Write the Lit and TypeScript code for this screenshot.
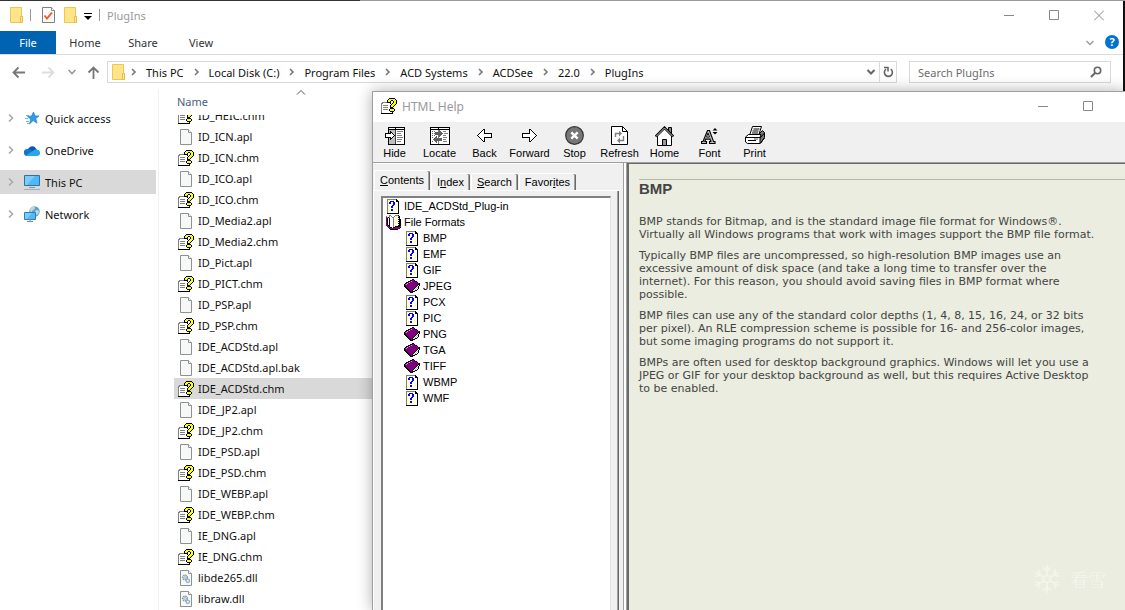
import { LitElement, html, css, svg } from "lit";

/* ---------- icon helpers ---------- */

const PALETTE: Record<string, string> = {
  k: "#000000", w: "#ffffff", g: "#808080", y: "#ffff00", d: "#404040", e: "#606060",
  s: "#c0c0c0", b: "#0000ff", p: "#800080", l: "#ffff80", q: "#c8a0c8",
};

/** Draws a bitmap icon from rows of palette letters. */
const bitmap = (rows: string[]) => {
  const width = Math.max(...rows.map((r) => r.length));
  const runs: unknown[] = [];
  rows.forEach((row, y) => {
    for (let x = 0; x < row.length; ) {
      let end = x + 1;
      while (row[end] === row[x]) end++;
      const fill = PALETTE[row[x]];
      if (fill) runs.push(svg`<rect x=${x} y=${y} width=${end - x} height="1" fill=${fill}></rect>`);
      x = end;
    }
  });
  return html`<svg width=${width} height=${rows.length} viewBox="0 0 ${width} ${rows.length}" shape-rendering="crispEdges" aria-hidden="true">${runs}</svg>`;
};

const icon = (w: number, h: number, body: unknown) =>
  html`<svg width=${w} height=${h} viewBox="0 0 ${w} ${h}" fill="none" aria-hidden="true">${body}</svg>`;

const chmIcon = () => bitmap([
  "........kkkkkk..",
  ".......kyyyyyyk.",
  "......kyyykkyyyk",
  "......kyyk..kyyk",
  ".gggggkkkk..kyyk",
  "ggwwwwwwwk.kyyyk",
  "gwwwwwwwwwkyyyk.",
  "gwgggggwwkyyyk..",
  "gwwwwwwwwkyyk...",
  "gwgggggwwkkk....",
  "gwwwwwwwwkkkk...",
  "gwgggggwkyyyyk..",
  "gwwwwwwwkyyyyk..",
  "gwwwwwwwwkkkk...",
  "gwwwwwwwwwwk....",
  "kkkkkkkkkkkk....",
]);

const topicIcon = () => bitmap([
  "gggggggggk..",
  "gwlwlwlwwkk.",
  "glwbbbbwwkkk",
  "gwbbwwbbwwwk",
  "glbbwwbbwlwk",
  "gwwwwwbbwwwk",
  "glwwwbbwwlwk",
  "gwlwbbwwlwwk",
  "glwwbbwwwlwk",
  "gwlwwwwwlwwk",
  "glwwbbwwwlwk",
  "gwlwbbwwlwwk",
  "glwlwlwlwwwk",
  "gwwwwwwwwwwk",
  "kkkkkkkkkkkk",
]);

const bookIcon = () => bitmap([
  "........kk......",
  "......kkppk.....",
  "....kkpqpppkk...",
  "..kkpqpppppppk..",
  ".kpqpppppppppppk",
  "kpqpppppppppppkk",
  "kppppppppppppkwk",
  "kkppppppppppkwk.",
  ".kkppppppppkwsk.",
  "..kkppppppkwswk.",
  "...kkppppkwswk..",
  "....kkppkwskk...",
  ".....kkpkkk.....",
  "......kkk.......",
]);

const openBookIcon = () => bitmap([
  "...gg....gggk..",
  "g..gwg..gwlwgk.",
  "pgkgwwggwlwwkk.",
  "pkwkwwwgwwlwwk.",
  "pkwkwwwgwlwwkkk",
  "pkwkwwwgwwlwwkk",
  "pkwkwwwgwlwwkkk",
  "pkwkwwwgwwlwwkk",
  "pkwkwwwgwlwwkkk",
  "pkwkwwwgwwlwwkk",
  "ppkkwwwgwlwwkkk",
  ".ppkwwwgwkkkkkp",
  "..ppkkwkkpppppk",
  "...ppppppppppk.",
  "....kkkkkkkk...",
]);

const fileIcon = () => icon(12, 16, svg`
  <path d="M.5.5h8l3 3v12H.5z" fill="#f7f9f9" stroke="#8d9290"/>
  <path d="M8.5.5v3h3" fill="#fff" stroke="#8d9290"/>`);

const dllIcon = () => icon(12, 16, svg`
  <path d="M.5.5h8l3 3v12H.5z" fill="#f7f9f9" stroke="#8d9290"/>
  <path d="M8.5.5v3h3" fill="#fff" stroke="#8d9290"/>
  <circle cx="5" cy="7.500" r="2.300" stroke="#8b98a3" stroke-width="1.600" stroke-dasharray="1.400 .6"/>
  <circle cx="5" cy="7.500" r="1" stroke="#8b98a3" stroke-width=".6"/>
  <circle cx="7.800" cy="10.800" r="1.700" stroke="#8fb6d3" stroke-width="1.400"/>`);

const folderIcon = () => icon(13, 16, svg`
  <path d="M.5.5h11v9h1v6H.5z" fill="#ffe48a" stroke="#ecc752"/>
  <path d="M10.500 9.500h2v6h-2z" fill="#ffe9a0" stroke="#e8bf43"/>`);

const propertiesIcon = () => icon(13, 16, svg`
  <path d="M.5.5h9l3 3v12H.5z" fill="#fbfbfb" stroke="#7f7f7f"/>
  <path d="M9.500.5v3h3" fill="#fff" stroke="#8f8f8f"/>
  <path d="M2.500 8.500l2.500 3 5-6" stroke="#ee5a24" stroke-width="1.900"/>`);

const chevron = (dir: "right" | "down" | "up", color: string, width = 1.6) => {
  const d = { right: "M3 1.500L6.500 5 3 8.500", down: "M1.500 3L5 6.500 8.500 3", up: "M1 6.500l4-4 4 4" }[dir];
  return icon(10, 10, svg`<path d=${d} stroke=${color} stroke-width=${width}/>`);
};

const crumbChevron = () => icon(10, 10, svg`<path d="M3 2l3 3-3 3" stroke="#777" stroke-width="1.600"/>`);

const arrow = (dir: "left" | "right" | "up", color: string) => {
  const d = {
    left: "M13 6.500H1.500M6.500 1.500l-5 5 5 5",
    right: "M0 6.500h11.500M6.500 1.500l5 5-5 5",
    up: "M6.500 13V1.500M1.500 6.500l5-5 5 5",
  }[dir];
  return icon(13, 13, svg`<path d=${d} stroke=${color} stroke-width="1.800"/>`);
};

const starIcon = () => icon(15, 14, svg`
  <path d="M8.500 1l1.600 4H14l-3.200 2.600 1.200 4.600-3.800-2.600L4.500 13l1.200-4.800L2.500 5.400l4-.3z" fill="#2f9bea" stroke="#1d83d0" stroke-width=".7"/>
  <path d="M1 4.500h3M0 7.500h3M1 10.500h3M2 12.500h2" stroke="#64b5f0"/>`);

const cloudIcon = () => icon(16, 11, svg`
  <path d="M4 6a4.300 4.300 0 0 1 8-2.600L13 5 6 9z" fill="#0a57b0"/>
  <path d="M3.500 11A3.500 3.500 0 0 1 3.200 4a4 4 0 0 1 3 .6L12 8l-4 3z" fill="#1674cf"/>
  <path d="M3.500 11l-1.500-.6L9.500 5.500A3.500 3.500 0 0 1 13 4.800 3.100 3.100 0 0 1 13 11z" fill="#28a8ea"/>`);

const pcIcon = () => icon(16, 16, svg`
  <path d="M.5 1.500h15v10H.5z" fill="#4db8fa" stroke="#3a6e93"/>
  <path d="M1 2h10L3 11H1z" fill="#7accfc"/>
  <path d="M5 13.500h6" stroke="#7d98aa"/><path d="M0 15.500h16" stroke="#9db0bd"/>`);

const networkIcon = () => icon(16, 16, svg`
  <circle cx="10.500" cy="5.500" r="5.200" fill="#5f9fc6"/>
  <path d="M6 3c2-3 5-3 5-1S8 4 8 6 6 6 6 3zM11 5c2-2 4-1 4 1s-3 4-4 3z" fill="#b5d8e4"/>
  <path d="M.5 6.500h11v7H.5z" fill="#4db8fa" stroke="#3a7ba8"/>
  <path d="M1 7h7l-5 6H1z" fill="#7accfc"/><path d="M3 15.500h6M6 13v2" stroke="#7391a5"/>`);

const searchIcon = () => icon(12, 12, svg`
  <circle cx="7.500" cy="4.500" r="3.200" stroke="#666" stroke-width="1.600"/>
  <path d="M5 7L1 11" stroke="#666" stroke-width="2"/>`);

const reloadIcon = () => icon(11, 12, svg`
  <path d="M7.800 3.200A4 4 0 1 1 3 3.200" stroke="#666" stroke-width="1.600"/>
  <path d="M1 1.500h4v4" stroke="#666" stroke-width="1.600"/>`);

const minimizeIcon = () => icon(10, 11, svg`<path d="M0 5.500h10" stroke="#888"/>`);
const maximizeIcon = () => icon(10, 11, svg`<path d="M.5.5h9v9h-9z" stroke="#888"/>`);
const closeIcon = () => icon(10, 11, svg`<path d="M0 .5l10 10M10 .5L0 10.500" stroke="#888"/>`);

const hideIcon = () => bitmap([
  "...kkkkkkkkkkkkkkkkk",
  "...kwwwwwwkwwwwwwwwk",
  "...kkkkkkkkkkkkkkkkk",
  "...kssssssdwwwwwwwwk",
  "...kskssssdwggggggwk",
  "...kskksssdwwwwwwwwk",
  "kkkkkkwkssdwggggwwwk",
  "kwwwwwwwksdwwwwwwwwk",
  "kwwwwwwwwkdwgggggwwk",
  "kwwwwwwwksdwwwwwwwwk",
  "kkkkkkwkssdwggggggwk",
  "...kskksssdwwwwwwwwk",
  "...kskssssdwgggggwwk",
  "...kssssssdwwwwwwwwk",
  "...kssssssdwggggwwwk",
  "...kssssssdwwwwwwwwk",
  "...kssssssdwwwwwwwwk",
  "...kkkkkkkkkkkkkkkkk",
]);

const locateIcon = () => bitmap([
  "kkkkkkkkkkkkkkkkkkkk",
  "kwwwwwwwkwwwwwwwwwwk",
  "kkkkkkkkkkkkkkkkkkkk",
  "kwwwwwwwgewwwwwwwwwk",
  "kwewewwwgeewwgggwwwk",
  "kwwwweeeeeeewwwwwwwk",
  "kweweeeeeeeeewggggwk",
  "kwwwweeeeeeewwwwwwwk",
  "kwewewwwgeewwgggwwwk",
  "kwwwwwewgewwwwwwwwwk",
  "kwewweewgwwwwggggwwk",
  "kwwweeeeeeeewwwwwwwk",
  "kwweeeeeeeeewgggwwwk",
  "kwwweeeeeeeewwwwwwwk",
  "kwewweewgwwwwggggwwk",
  "kwwwwwewgwwwwwwwwwwk",
  "kwwwwwwwgwwwwwwwwwwk",
  "kkkkkkkkkkkkkkkkkkkk",
]);

const backRows = [
  "......kk.......",
  ".....kwk.......",
  "....kwwk.......",
  "...kwwwk.......",
  "..kwwwwkkkkkkkk",
  ".kwwwwwwwwwwwwk",
  "kwwwwwwwwwwwwwk",
  ".kwwwwwwwwwwwwk",
  "..kwwwwkkkkkkkk",
  "...kwwwk.......",
  "....kwwk.......",
  ".....kwk.......",
  "......kk.......",
];
const backIcon = () => bitmap(backRows);
const forwardIcon = () => bitmap(backRows.map((r) => [...r].reverse().join("")));

const stopIcon = () => icon(19, 19, svg`
  <circle cx="9.500" cy="9.500" r="8.800" fill="#777" stroke="#333" stroke-width="1.200"/>
  <path d="M6.300 6.300l6.400 6.400M12.700 6.300l-6.400 6.400" stroke="#fff" stroke-width="2.400"/>`);

const refreshIcon = () => icon(17, 19, svg`
  <path d="M.5.5h11l5 5v13H.5z" fill="#fff" stroke="#000"/>
  <path d="M11.500.5v5h5" stroke="#000"/>
  <path d="M4.500 11V7.500h4M12.500 10v4.500h-4" stroke="#808080" stroke-width="1.400"/>
  <path d="M8 4.500l3 3-3 3zM9 11.500l-3 3 3 3z" fill="#808080"/>`);

const homeIcon = () => icon(19, 20, svg`
  <path d="M13.500 8V1.500h3V10" fill="#888" stroke="#000"/>
  <path d="M2.500 10v9.500h14V10l-7-7z" fill="#fff" stroke="#000"/>
  <path d="M.5 10.500l9-9 9 9" stroke="#000" stroke-width="2.200"/>
  <path d="M1 10.500l8.500-8.500 8.500 8.500" stroke="#ddd" stroke-width=".9"/>
  <path d="M7.500 19.500v-6h4v6z" fill="#999" stroke="#000"/>`);

const fontIcon = () => icon(17, 16, svg`
  <path d="M6.500 2.500h2l4 11h1.500v2H8.500v-2h1.400l-.8-2.400H4.700l-.8 2.400h1.600v2H.5v-2H2z" fill="#bbb" stroke="#000" stroke-width="1.100"/>
  <path d="M5.500 9h3L7 5z" fill="#fff" stroke="#000" stroke-width=".9"/>
  <path d="M14 0l2.500 2.500h-5zM14 6.500l2.500-2.500h-5z" fill="#000"/>`);

const printIcon = () => icon(20, 19, svg`
  <path d="M4.500 9.500L7.500.5h9l-3 9" fill="#fff" stroke="#000"/>
  <path d="M8.500 3h6M7.500 5h6M7 7h6" stroke="#000"/>
  <path d="M14 8l3.500-3.500 2 2v5l-4 6" fill="#777" stroke="#000"/>
  <path d="M.5 11l3-2.500h12.500l-1 3v6H2.500l-2-1.500z" fill="#fff" stroke="#000"/>
  <path d="M1 11.500h14.500M3 14.500h8M15.500 11.500l4-4.500M15.500 17l4-5" stroke="#000"/>
  <path d="M9 13h4" stroke="#555"/>`);

const snowflakeIcon = () => icon(28, 30, svg`
  <g stroke="#f3f5ea" stroke-width="1.600">
  ${[0, 60, 120, 180, 240, 300].map((a) => svg`<path transform="rotate(${a} 14 15)" d="M14 12V1M10 3l4 4 4-4M14 11l-3 2"/>`)}
  </g>`);

/* ---------- data ---------- */

const FILES = [
  "ID_HEIC.chm", "ID_ICN.apl", "ID_ICN.chm", "ID_ICO.apl", "ID_ICO.chm", "ID_Media2.apl",
  "ID_Media2.chm", "ID_Pict.apl", "ID_PICT.chm", "ID_PSP.apl", "ID_PSP.chm", "IDE_ACDStd.apl",
  "IDE_ACDStd.apl.bak", "IDE_ACDStd.chm", "IDE_JP2.apl", "IDE_JP2.chm", "IDE_PSD.apl",
  "IDE_PSD.chm", "IDE_WEBP.apl", "IDE_WEBP.chm", "IE_DNG.apl", "IE_DNG.chm", "libde265.dll", "libraw.dll",
];
const CRUMBS = ["This PC", "Local Disk (C:)", "Program Files", "ACD Systems", "ACDSee", "22.0", "PlugIns"];
const NAV: [string, () => unknown][] = [
  ["Quick access", starIcon], ["OneDrive", cloudIcon], ["This PC", pcIcon], ["Network", networkIcon],
];
const TOOLS: [string, () => unknown][] = [
  ["Hide", hideIcon], ["Locate", locateIcon], ["Back", backIcon], ["Forward", forwardIcon],
  ["Stop", stopIcon], ["Refresh", refreshIcon], ["Home", homeIcon], ["Font", fontIcon], ["Print", printIcon],
];
const TOPICS: [string, () => unknown][] = [
  ["BMP", topicIcon], ["EMF", topicIcon], ["GIF", topicIcon], ["JPEG", bookIcon], ["PCX", topicIcon],
  ["PIC", topicIcon], ["PNG", bookIcon], ["TGA", bookIcon], ["TIFF", bookIcon], ["WBMP", topicIcon], ["WMF", topicIcon],
];

const controls = css`
  * { box-sizing: border-box; }
  svg { display: block; flex: none; }
  button { font: inherit; color: inherit; background: none; border: 0; padding: 0; margin: 0; }
  ul { list-style: none; margin: 0; padding: 0; }
`;

/* ---------- file explorer window ---------- */

class FileExplorer extends LitElement {
  static styles = [controls, css`
    :host { display: flex; flex-direction: column; background: #fff; color: #111; font: 11px "Noto Sans", "Open Sans", sans-serif; overflow: hidden; }
    .title { display: flex; align-items: center; height: 30px; padding: 0 19px 2px 10px; flex: none; }
    .title .sep { width: 1px; height: 12px; background: #999; margin: 0 7px; }
    .title .sep.first { margin-right: 11px; }
    .title .props { margin-right: 9px; }
    .title h1 { font: inherit; color: #999; margin: 0; flex: 1; }
    .more { margin: 2px 0 0 7px; }
    .buttons { display: flex; gap: 35px; }
    .ribbon { display: flex; height: 24px; flex: none; border-bottom: 1px solid #dadbdc; align-items: stretch; color: #333; }
    .ribbon button { width: 58px; }
    .ribbon .file { width: 56px; background: #0063b1; color: #fff; }
    .ribbon .grow { flex: 1; }
    .ribbon .collapse { width: 22px; display: grid; place-items: center; }
    .ribbon .help { width: 14px; height: 14px; margin: 4px 4px 0; border-radius: 50%; background: #0072d0; color: #fff; font-weight: 700; line-height: 14px; }
    .bar { display: flex; align-items: center; height: 34px; padding: 0 12px; flex: none; }
    .bar .move { margin-right: 17px; }
    .bar .fwd { margin-right: 12px; }
    .bar .recent { margin-right: 10px; }
    .bar .up { margin-right: 7px; }
    .address { flex: 1; display: flex; align-items: center; height: 22px; border: 1px solid #d9d9d9; padding-left: 4px; white-space: nowrap; }
    .address ol { display: flex; list-style: none; margin: 0 0 0 4px; padding: 0; flex: 1; }
    .address li { display: flex; align-items: center; padding-right: 8px; gap: 7px; }
    .reload { height: 20px; width: 17px; border-left: 1px solid #d9d9d9; display: grid; place-items: center; margin-left: 3px; }
    .search { display: flex; align-items: center; width: 202px; height: 22px; border: 1px solid #d9d9d9; margin-left: 12px; padding: 0 8px; }
    .search input { flex: 1; min-width: 0; border: 0; padding: 0; font: inherit; background: none; outline: 0; }
    .search input::placeholder { color: #6d6d6d; opacity: 1; }
    .body { display: flex; flex: 1; min-height: 0; }
    nav { width: 159px; border-right: 1px solid #f0f0f0; padding: 17px 2px 0 0; flex: none; }
    nav ul { display: flex; flex-direction: column; gap: 8px; }
    nav a { display: flex; align-items: center; height: 24px; padding-left: 6px; color: #111; text-decoration: none; }
    nav .icon { width: 16px; margin: 0 5px 0 8px; display: grid; place-items: center; }
    nav .current { background: #d9d9d9; }
    .list { width: 228px; display: flex; flex-direction: column; min-height: 0; padding-left: 15px; }
    .head { height: 26px; flex: none; padding: 5px 0 0 3px; display: grid; grid-template-columns: 119px 1fr; align-items: start; color: #4c607a; }
    .head svg { margin-top: -6px; }
    .head span { line-height: 16px; }
    .rows { flex: 1; overflow: hidden; }
    .rows ul { margin-top: -10px; }
    .rows li { display: flex; align-items: center; height: 21px; padding-left: 4px; gap: 4px; }
    .rows .icon { width: 16px; display: grid; place-items: center; }
    .rows .selected { background: #d9d9d9; }
  `];

  fileGlyph(name: string) {
    if (name.endsWith(".chm")) return chmIcon();
    return name.endsWith(".dll") ? dllIcon() : fileIcon();
  }

  render() {
    return html`
      <header class="title">
        ${folderIcon()}<span class="sep first"></span>
        <span class="props">${propertiesIcon()}</span>${folderIcon()}
        <span class="more">${icon(8, 7, svg`<path d="M0 .5h8" stroke="#000"/><path d="M0 3h8L4 7z" fill="#000"/>`)}</span>
        <span class="sep"></span>
        <h1>PlugIns</h1>
        <div class="buttons">
          <button aria-label="Minimize">${minimizeIcon()}</button>
          <button aria-label="Maximize">${maximizeIcon()}</button>
          <button aria-label="Close">${closeIcon()}</button>
        </div>
      </header>
      <div class="ribbon">
        <button class="file">File</button><button>Home</button><button>Share</button><button>View</button>
        <span class="grow"></span>
        <button class="collapse" aria-label="Expand the ribbon">${chevron("down", "#999", 1.3)}</button>
        <button class="help" aria-label="Help">?</button>
      </div>
      <div class="bar">
        <button class="move" aria-label="Back">${arrow("left", "#777")}</button>
        <button class="fwd" aria-label="Forward">${arrow("right", "#ddd")}</button>
        <button class="recent" aria-label="Recent locations">${chevron("down", "#999")}</button>
        <button class="up" aria-label="Up">${arrow("up", "#777")}</button>
        <div class="address">
          ${folderIcon()}
          <ol>${CRUMBS.map((c) => html`<li>${crumbChevron()}<span>${c}</span></li>`)}</ol>
          <button aria-label="Previous locations">${chevron("down", "#666", 2)}</button>
          <button class="reload" aria-label="Refresh">${reloadIcon()}</button>
        </div>
        <label class="search"><input type="text" placeholder="Search PlugIns" aria-label="Search PlugIns" />${searchIcon()}</label>
      </div>
      <div class="body">
        <nav><ul>${NAV.map(([name, glyph]) => html`<li><a href="#" class=${name === "This PC" ? "current" : ""}>
          ${chevron("right", "#aaa")}<span class="icon">${glyph()}</span>${name}</a></li>`)}</ul></nav>
        <section class="list">
          <div class="head"><span>Name</span>${chevron("up", "#555", 1)}</div>
          <div class="rows"><ul>${FILES.map((f) => html`<li class=${f === "IDE_ACDStd.chm" ? "selected" : ""}>
            <span class="icon">${this.fileGlyph(f)}</span>${f}</li>`)}</ul></div>
        </section>
      </div>`;
  }
}
customElements.define("file-explorer", FileExplorer);

/* ---------- HTML Help window ---------- */

class HelpWindow extends LitElement {
  static styles = [controls, css`
    :host { display: flex; flex-direction: column; background: #f0f0f0; color: #000; font: 11px "Liberation Sans", Arial, sans-serif; border: solid #a0a0a0; border-width: 1px 0 0 1px; box-shadow: 0 0 14px rgba(0, 0, 0, 0.32); }
    .title { display: flex; align-items: center; height: 30px; background: #fff; padding: 0 32px 2px 8px; flex: none; gap: 5px; }
    .title h1 { flex: 1; margin: 0; font: 12px "Noto Sans", "Open Sans", sans-serif; color: #999; }
    .buttons { display: flex; gap: 35px; }
    .tools { display: flex; height: 41px; flex: none; border-bottom: 1px solid #a0a0a0; }
    .tools button { width: 45px; display: flex; flex-direction: column; align-items: center; padding: 3px 2px 0 0; }
    .tools .glyph { height: 21px; display: grid; place-items: center; margin-bottom: 1px; }
    .panes { flex: 1; display: flex; min-height: 0; }
    .side { width: 246px; flex: none; display: flex; flex-direction: column; border-top: 1px solid #fff; padding-top: 6px; }
    .tabs { display: flex; align-items: flex-end; height: 20px; padding-left: 1px; }
    .tabs button { height: 17px; border: solid #fff; border-width: 1px 0 0 1px; box-shadow: inset -1px 0 #696969, inset -2px 0 #a0a0a0; border-radius: 2px 2px 0 0; margin-right: 1px; padding: 0 6px 0 5px; }
    .tabs .active { height: 20px; padding-bottom: 2px; }
    .page { flex: 1; border: solid #fff; border-width: 1px 0 0 1px; box-shadow: inset -1px 0 #696969, inset -2px 0 #a0a0a0; padding: 5px 8px 0 7px; display: flex; min-height: 0; }
    .tree { flex: 1; background: #fff; border: solid #808080; border-width: 2px 0 0 2px; border-right: 1px solid #e3e3e3; padding-left: 2px; }
    .tree li > span { display: flex; align-items: center; height: 16px; gap: 3px; }
    .tree .icon { width: 16px; display: grid; place-items: center; }
    .tree ul ul { padding-left: 19px; }
    .split { width: 4px; flex: none; border: solid #a0a0a0; border-width: 0 1px; margin-left: 4px; background: #fff; }
    article { position: relative; flex: 1; min-width: 0; background: #eaeddf; border: solid #696969; border-width: 1px 0 0 2px; padding: 15px 0 0 10px; font: 11px/13px "DejaVu Sans", Verdana, sans-serif; color: #444; }
    hr { border: 0; border-top: 1px solid #b4b7ac; margin: 0; }
    h2 { font: bold 15px/18px "Liberation Sans", Arial, sans-serif; margin: 0 0 17px; }
    p { margin: 0 0 8px; white-space: nowrap; }
    .mark { position: absolute; right: 19px; bottom: 16px; display: flex; align-items: center; gap: 9px; font: 18px "Noto Serif CJK SC", "Noto Sans CJK SC", serif; color: #f5f6ee; }
  `];

  render() {
    return html`
      <header class="title">${chmIcon()}<h1>HTML Help</h1>
        <div class="buttons"><button aria-label="Minimize">${minimizeIcon()}</button><button aria-label="Maximize">${maximizeIcon()}</button></div>
      </header>
      <div class="tools">${TOOLS.map(([name, glyph]) => html`<button><span class="glyph">${glyph()}</span>${name}</button>`)}</div>
      <div class="panes">
        <div class="side">
          <div class="tabs" role="tablist">
            <button class="active" role="tab"><u>C</u>ontents</button><button role="tab">I<u>n</u>dex</button><button role="tab"><u>S</u>earch</button><button role="tab">Favor<u>i</u>tes</button>
          </div>
          <div class="page"><div class="tree"><ul>
            <li><span><span class="icon">${topicIcon()}</span>IDE_ACDStd_Plug-in</span></li>
            <li><span><span class="icon">${openBookIcon()}</span>File Formats</span>
              <ul>${TOPICS.map(([name, glyph]) => html`<li><span><span class="icon">${glyph()}</span>${name}</span></li>`)}</ul>
            </li>
          </ul></div></div>
        </div>
        <div class="split"></div>
        <article>
          <hr />
          <h2>BMP</h2>
          <p>BMP stands for Bitmap, and is the standard image file format for Windows®.<br />Virtually all Windows programs that work with images support the BMP file format.</p>
          <p>Typically BMP files are uncompressed, so high-resolution BMP images use an<br />excessive amount of disk space (and take a long time to transfer over the<br />internet). For this reason, you should avoid saving files in BMP format where<br />possible.</p>
          <p>BMP files can use any of the standard color depths (1, 4, 8, 15, 16, 24, or 32 bits<br />per pixel). An RLE compression scheme is possible for 16- and 256-color images,<br />but some imaging programs do not support it.</p>
          <p>BMPs are often used for desktop background graphics. Windows will let you use a<br />JPEG or GIF for your desktop background as well, but this requires Active Desktop<br />to be enabled.</p>
          <div class="mark">${snowflakeIcon()}<span>看雪</span></div>
        </article>
      </div>`;
  }
}
customElements.define("help-window", HelpWindow);

/* ---------- desktop ---------- */

class AppRoot extends LitElement {
  static styles = css`
    :host { display: block; position: relative; height: 100vh; overflow: hidden; background: linear-gradient(90deg, #333 32%, #999 32%) 0 0 / 100% 1px no-repeat #111; }
    file-explorer { position: absolute; inset: 1px 2px 0 0; }
    help-window { position: absolute; inset: 91px 0 0 372px; }
  `;
  render() {
    return html`<file-explorer></file-explorer><help-window></help-window>`;
  }
}
customElements.define("app-root", AppRoot);
